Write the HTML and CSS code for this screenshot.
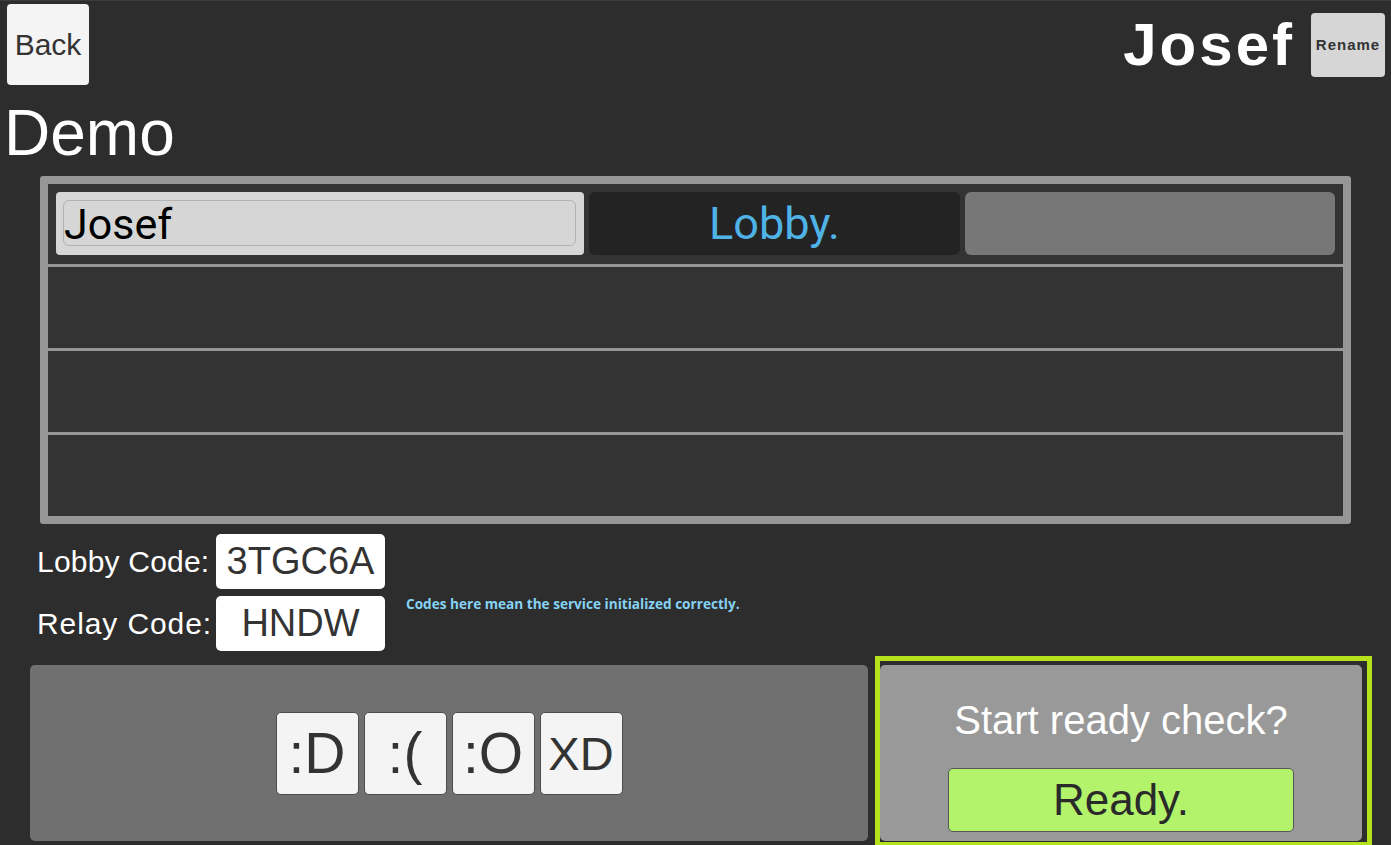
FILE: index.html
```html
<!DOCTYPE html>
<html>
<head>
<meta charset="utf-8">
<link rel="stylesheet" href="styles.css">
</head>
<body>
<div class="page">
  <header class="header">
    <button class="back-btn">Back</button>
    <div class="user">
      <span class="user-name">Josef</span>
      <button class="rename-btn">Rename</button>
    </div>
  </header>
  <h1 class="title">Demo</h1>
  <section class="players">
    <div class="row row-first">
      <div class="name-cell"><div class="name-field">Josef</div></div>
      <div class="status-cell">Lobby.</div>
      <div class="empty-cell"></div>
    </div>
    <div class="row"></div>
    <div class="row"></div>
    <div class="row"></div>
  </section>
  <section class="codes">
    <span class="code-label">Lobby Code:</span>
    <span class="code-box">3TGC6A</span>
    <span></span>
    <span class="code-label code-label-wide">Relay Code:</span>
    <span class="code-box">HNDW</span>
    <span class="hint">Codes here mean the service initialized correctly.</span>
  </section>
  <section class="bottom">
    <div class="emotes">
      <button class="emote">:D</button>
      <button class="emote">:(</button>
      <button class="emote">:O</button>
      <button class="emote emote-small">XD</button>
    </div>
    <div class="ready-frame">
      <div class="ready-panel">
        <div class="ready-question">Start ready check?</div>
        <button class="ready-btn">Ready.</button>
      </div>
    </div>
  </section>
</div>
</body>
</html>
```
FILE: styles.css
```css
* { box-sizing: border-box; }
html, body { margin: 0; padding: 0; }
body {
  background: #2d2d2d;
  font-family: "Liberation Sans", Arial, sans-serif;
  width: 1391px;
  height: 845px;
  overflow: hidden;
}
.page {
  border-top: 1px solid #3b3b3b;
}
button {
  font-family: "Liberation Sans", Arial, sans-serif;
  padding: 0;
  margin: 0;
  cursor: pointer;
}
.header {
  display: flex;
  justify-content: space-between;
  align-items: center;
  padding: 3px 6px 0 7px;
}
.back-btn {
  width: 82px;
  height: 81px;
  background: #f4f4f4;
  border: none;
  border-radius: 4px;
  font-size: 30px;
  color: #333;
}
.user {
  display: flex;
  align-items: center;
  gap: 16px;
}
.user-name {
  font-family: "Liberation Sans", Arial, sans-serif;
  font-weight: bold;
  font-size: 60px;
  letter-spacing: 3px;
  color: #fff;
  line-height: 1;
}
.rename-btn {
  width: 74px;
  height: 64px;
  background: #d6d6d6;
  border: none;
  border-radius: 4px;
  font-weight: bold;
  font-size: 15px;
  letter-spacing: 1px;
  color: #333;
}
.title {
  margin: 16px 0 0 0;
  padding-left: 4px;
  font-weight: normal;
  font-size: 64px;
  line-height: 64px;
  color: #fff;
}
.players {
  margin: 11px 40px 0 40px;
  height: 348px;
  background: #969696;
  border-radius: 3px;
  padding: 8px;
  display: grid;
  grid-template-rows: 80px 81px 81px 81px;
  row-gap: 3px;
}
.row {
  background: #333333;
}
.row-first {
  display: grid;
  grid-template-columns: 528px 371px 370px;
  column-gap: 5px;
  padding: 8px 8px 9px 8px;
}
.name-cell {
  background: #d6d6d6;
  border-radius: 4px;
  padding: 8px;
}
.name-field {
  height: 46px;
  border: 1px solid #b3b3b3;
  border-radius: 6px;
  font-family: Roboto, sans-serif;
  font-size: 43px;
  line-height: 46px;
  color: #000;
  margin-left: -1px;
}
.status-cell {
  background: #232323;
  border-radius: 6px;
  font-family: Roboto, sans-serif;
  font-size: 45px;
  color: #50b3e7;
  display: flex;
  align-items: center;
  justify-content: center;
}
.empty-cell {
  background: #777777;
  border-radius: 6px;
}
.codes {
  margin-top: 10px;
  padding-left: 37px;
  display: grid;
  grid-template-columns: 179px 169px auto;
  grid-auto-rows: 55px;
  row-gap: 7px;
  align-items: center;
  justify-items: start;
}
.code-label {
  font-size: 30px;
  letter-spacing: 0.2px;
  color: #fff;
}
.code-label-wide {
  letter-spacing: 0.9px;
}
.code-box {
  width: 169px;
  height: 55px;
  background: #fff;
  border-radius: 5px;
  font-size: 38px;
  color: #333;
  display: flex;
  align-items: center;
  justify-content: center;
}
.hint {
  align-self: start;
  margin-left: 21px;
  margin-top: 0;
  font-family: "Open Sans", sans-serif;
  font-weight: bold;
  font-size: 13.6px;
  line-height: 16px;
  color: #86d2f3;
}
.bottom {
  margin-top: 5px;
  padding-left: 30px;
  display: flex;
  align-items: flex-start;
  gap: 7px;
}
.emotes {
  margin-top: 9px;
  width: 838px;
  height: 176px;
  background: #707070;
  border-radius: 5px;
  display: flex;
  align-items: center;
  justify-content: center;
  gap: 5px;
}
.emote {
  width: 83px;
  height: 83px;
  background: #f4f4f4;
  border: 1px solid #4d4d4d;
  border-radius: 5px;
  font-size: 57px;
  color: #333;
}
.emote-small {
  font-size: 47px;
}
.ready-frame {
  width: 497px;
  border: 5px solid #b6e21b;
  padding: 4px 5px 1px 0;
}
.ready-panel {
  height: 176px;
  background: #999999;
  border-radius: 5px;
  display: flex;
  flex-direction: column;
  align-items: center;
  padding-top: 35px;
}
.ready-question {
  font-size: 40px;
  line-height: 40px;
  color: #fff;
}
.ready-btn {
  margin-top: 28px;
  width: 346px;
  height: 64px;
  background: #b2f36b;
  border: 1px solid #555;
  border-radius: 5px;
  font-size: 44px;
  color: #2a2a2a;
}
```
